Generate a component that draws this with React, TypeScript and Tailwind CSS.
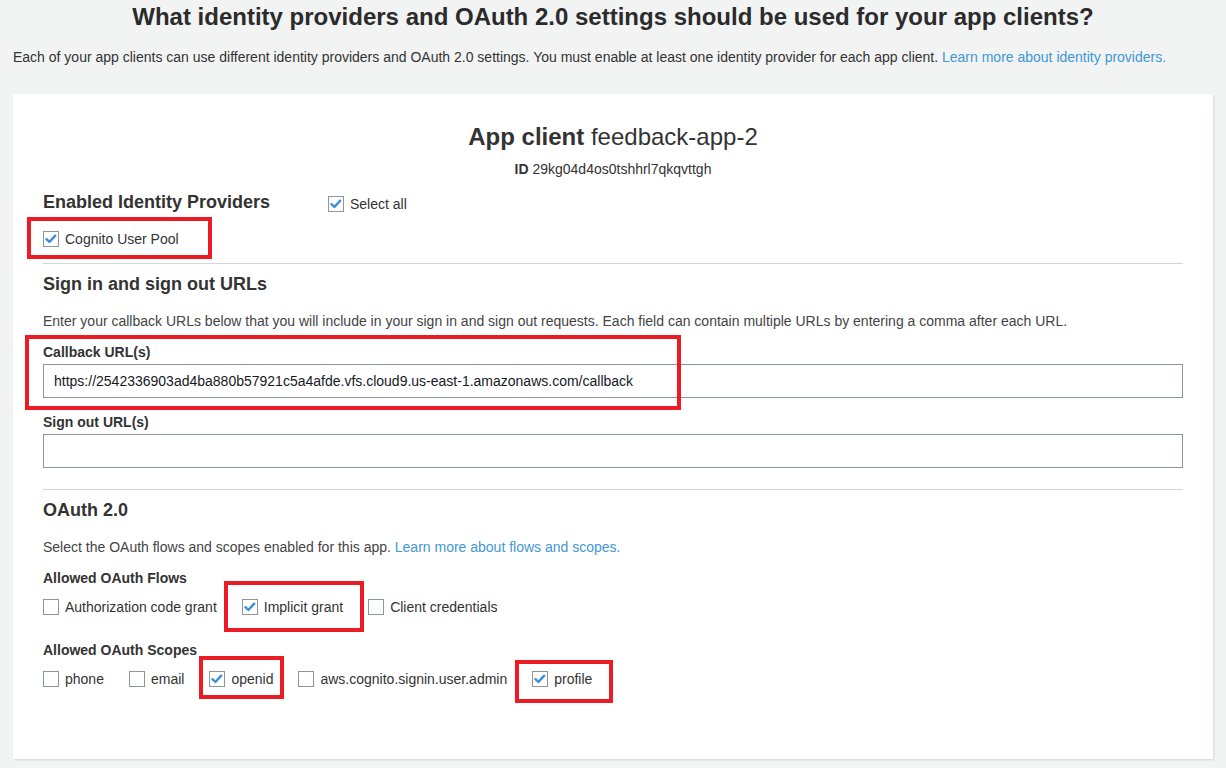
import type { ReactNode } from 'react';

function Checkbox({ checked }: { checked?: boolean }) {
  return (
    <span className="flex h-[16px] w-[16px] shrink-0 items-center justify-center border border-[#8d9696] bg-white">
      {checked && (
        <svg viewBox="0 0 16 16" className="h-[14px] w-[14px]">
          <path d="M2.8 8.2 L6.2 11.4 L12.8 4.2" fill="none" stroke="#3d8fd8" strokeWidth="2.8" strokeLinecap="round" strokeLinejoin="round" />
        </svg>
      )}
    </span>
  );
}

function Option({ label, checked, children }: { label: string; checked?: boolean; children?: ReactNode }) {
  return (
    <label className="relative flex h-[18px] items-center gap-[6px] text-[14px] text-[#333]">
      <Checkbox checked={checked} />
      <span>{label}</span>
      {children}
    </label>
  );
}

// red annotation frame drawn over the screenshot
function Mark({ className }: { className: string }) {
  return <span className={`pointer-events-none absolute border-[4px] border-[#ec1c24] ${className}`} />;
}

export default function App() {
  return (
    <div className="min-h-screen bg-[#f2f3f3] px-[13px] pb-[9px] font-['Liberation_Sans',Arial,sans-serif] text-[#333]">
      <h1 className="pt-[3px] text-center text-[24px] font-bold leading-[28px] text-[#2b2b2b]">
        What identity providers and OAuth 2.0 settings should be used for your app clients?
      </h1>
      <p className="mt-[16px] text-[14px] leading-[20px] text-[#333]">
        Each of your app clients can use different identity providers and OAuth 2.0 settings. You must enable at least one identity provider for each app client.{' '}
        <a className="text-[#3f97d8]">Learn more about identity providers.</a>
      </p>

      <div className="mt-[27px] bg-white px-[30px] pb-[71px] pt-[28px] shadow-[1px_1px_2px_rgba(0,0,0,0.12)]">
        <div className="text-center text-[24px] leading-[30px] text-[#333]">
          <span className="font-bold">App client</span> feedback-app-2
        </div>
        <div className="mt-[8px] text-center text-[14px] leading-[18px]">
          <span className="font-bold">ID</span> 29kg04d4os0tshhrl7qkqvttgh
        </div>

        <div className="mt-[13px] flex items-center">
          <h2 className="w-[285px] text-[18px] font-bold leading-[22px]">Enabled Identity Providers</h2>
          <div className="mt-[4px]">
            <Option label="Select all" checked />
          </div>
        </div>
        <div className="mt-[17px] flex">
          <Option label="Cognito User Pool" checked>
            <Mark className="-left-[16px] -top-[13px] h-[42px] w-[185px]" />
          </Option>
        </div>

        <div className="mt-[15px] border-t border-[#d5d5d5]" />

        <h2 className="mt-[9px] text-[18px] font-bold leading-[22px]">Sign in and sign out URLs</h2>
        <p className="mt-[17px] text-[14px] leading-[18px] text-[#444]">
          Enter your callback URLs below that you will include in your sign in and sign out requests. Each field can contain multiple URLs by entering a comma after each URL.
        </p>

        <div className="relative mt-[14px]">
          <div className="text-[14px] font-bold leading-[16px]">Callback URL(s)</div>
          <div className="mt-[4px] flex h-[34px] items-center border border-[#8d9696] px-[10px] text-[14px] text-[#16191f]">
            https://2542336903ad4ba880b57921c5a4afde.vfs.cloud9.us-east-1.amazonaws.com/callback
          </div>
          <Mark className="-left-[18px] -top-[9px] h-[75px] w-[656px]" />
        </div>

        <div className="mt-[16px]">
          <div className="text-[14px] font-bold leading-[16px]">Sign out URL(s)</div>
          <div className="mt-[4px] h-[34px] border border-[#8d9696]" />
        </div>

        <div className="mt-[21px] border-t border-[#d5d5d5]" />

        <h2 className="mt-[9px] text-[18px] font-bold leading-[22px]">OAuth 2.0</h2>
        <p className="mt-[17px] text-[14px] leading-[18px] text-[#444]">
          Select the OAuth flows and scopes enabled for this app.{' '}
          <a className="text-[#3f97d8]">Learn more about flows and scopes.</a>
        </p>

        <div className="mt-[14px] text-[14px] font-bold leading-[16px]">Allowed OAuth Flows</div>
        <div className="mt-[12px] flex gap-[25px]">
          <Option label="Authorization code grant" />
          <Option label="Implicit grant" checked>
            <Mark className="-left-[18px] -top-[17px] h-[51px] w-[140px]" />
          </Option>
          <Option label="Client credentials" />
        </div>

        <div className="mt-[26px] text-[14px] font-bold leading-[16px]">Allowed OAuth Scopes</div>
        <div className="mt-[12px] flex gap-[25px]">
          <Option label="phone" />
          <Option label="email" />
          <Option label="openid" checked>
            <Mark className="-left-[10px] -top-[14px] h-[43px] w-[85px]" />
          </Option>
          <Option label="aws.cognito.signin.user.admin" />
          <Option label="profile" checked>
            <Mark className="-left-[17px] -top-[10px] h-[43px] w-[98px]" />
          </Option>
        </div>
      </div>
    </div>
  );
}
